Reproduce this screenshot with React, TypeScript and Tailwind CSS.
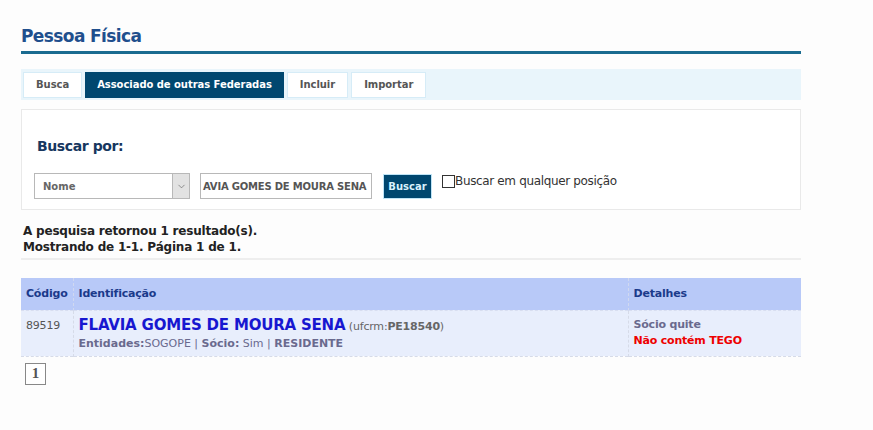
import { ChevronDown } from "lucide-react";

const font = { fontFamily: "Tahoma, 'DejaVu Sans', Verdana, sans-serif" };

const tabs = [
    { label: "Busca", active: false },
    { label: "Associado de outras Federadas", active: true },
    { label: "Incluir", active: false },
    { label: "Importar", active: false },
];

export default function App() {
    return (
        <div className="min-h-[430px] w-[873px] bg-[#fdfdfd] pt-[25px] pl-[21px]" style={font}>
            <div className="w-[780px]">
                {/* Title */}
                <h1 className="text-[17px] font-bold leading-[22px] text-[#1f4f8d] tracking-[-0.6px]">Pessoa Física</h1>
                <div className="mt-[4px] h-[3px] bg-[#1a6b90]" />

                {/* Tabs */}
                <div className="mt-[15px] flex h-[31px] items-center gap-[3px] bg-[#e9f5fb] px-[2px]">
                    {tabs.map((t) => (
                        <div
                            key={t.label}
                            className={
                                t.active
                                    ? "flex h-[26px] items-center bg-[#00476f] px-[12px] text-[10px] font-bold tracking-[-0.05px] text-white"
                                    : "flex h-[26px] items-center border border-[#d6ecf7] bg-white px-[12px] text-[10px] font-bold tracking-[-0.05px] text-[#555555]"
                            }
                        >
                            {t.label}
                        </div>
                    ))}
                </div>

                {/* Search box */}
                <div className="mt-[9px] h-[101px] border border-[#e9e9e9] bg-white px-[12px] pt-[26px]">
                    <div className="pl-[3px] text-[14px] font-bold tracking-[-0.4px] text-[#17375f]">Buscar por:</div>
                    <div className="mt-[16px] flex items-start">
                        <div className="flex h-[26px] w-[156px] items-center border border-[#b8b8b8] bg-white">
                            <span className="flex-1 pl-[8px] text-[10px] font-bold text-[#666666]">Nome</span>
                            <span className="flex h-[24px] w-[17px] items-center justify-center border-l border-[#b8b8b8] bg-[#e2e2e2]">
                                <ChevronDown size={11} strokeWidth={1.3} className="text-[#555555]" />
                            </span>
                        </div>
                        <div className="ml-[10px] flex h-[26px] w-[172px] items-center overflow-hidden border border-[#b8b8b8] bg-white">
                            <span className="whitespace-nowrap pl-[2px] text-[10px] font-bold tracking-[-0.2px] text-[#555555]">AVIA GOMES DE MOURA SENA</span>
                        </div>
                        <button className="ml-[11px] mt-[1px] flex h-[25px] w-[49px] items-center justify-center border border-[#bfe4f6] bg-[#00476f] text-[10px] font-bold text-[#d8f1fd]">
                            Buscar
                        </button>
                        <label className="ml-[10px] mt-[2px] flex items-start text-[12px] tracking-[-0.35px] text-[#333333]">
                            <span className="h-[13px] w-[13px] border border-[#333333] bg-white" />
                            <span className="leading-[13px]">Buscar em qualquer posição</span>
                        </label>
                    </div>
                </div>

                {/* Results info */}
                <div className="mt-[13px] pl-[2px] text-[12px] font-bold leading-[16px] tracking-[-0.2px] text-[#222222]">
                    <p>A pesquisa retornou 1 resultado(s).</p>
                    <p>Mostrando de 1-1. Página 1 de 1.</p>
                </div>
                <div className="mt-[3px] h-[2px] bg-[#eeeeee]" />

                {/* Table */}
                <table className="mt-[18px] w-full border-collapse text-[11px]">
                    <thead>
                        <tr className="h-[32px] bg-[#b8c9f8] text-left font-bold tracking-[-0.2px] text-[#1b3a8b]">
                            <th className="w-[52px] border-r border-dashed border-[#d0d8f0] pl-[5px] font-bold">Código</th>
                            <th className="border-r border-dashed border-[#d0d8f0] pl-[5px] font-bold">Identificação</th>
                            <th className="w-[173px] pl-[5px] font-bold">Detalhes</th>
                        </tr>
                    </thead>
                    <tbody>
                        <tr className="h-[46px] border-t border-b border-dashed border-t-[#d8def0] border-b-[#d6dbe8] bg-[#e8eefc] align-top">
                            <td className="border-r border-dashed border-[#d6dbe8] pl-[5px] pt-[7px] tracking-[-0.2px] text-[#555555]">89519</td>
                            <td className="border-r border-dashed border-[#d6dbe8] pl-[5px] pt-[5px]">
                                <div className="leading-[18px]">
                                    <span className="text-[15px] font-bold tracking-[-0.2px] text-[#1717d0]">FLAVIA GOMES DE MOURA SENA</span>{" "}
                                    <span className="tracking-[-0.2px] text-[#666666]">
                                        (ufcrm:<b>PE18540</b>)
                                    </span>
                                </div>
                                <div className="leading-[15px] text-[#6a6a8e]">
                                    <b>Entidades:</b>SOGOPE | <b>Sócio:</b> Sim | <b>RESIDENTE</b>
                                </div>
                            </td>
                            <td className="pl-[5px] pt-[6px] font-bold leading-[16px] tracking-[-0.2px]">
                                <div className="text-[#6a6a8e]">Sócio quite</div>
                                <div className="text-[#ee0000]">Não contém TEGO</div>
                            </td>
                        </tr>
                    </tbody>
                </table>

                {/* Pagination */}
                <div className="mt-[6px] ml-[4px] flex h-[22px] w-[21px] items-center justify-center border border-[#888888] bg-white text-[15px] font-bold text-[#555555]" style={{ fontFamily: "'Liberation Serif', 'DejaVu Serif', serif" }}>
                    1
                </div>
            </div>
        </div>
    );
}
